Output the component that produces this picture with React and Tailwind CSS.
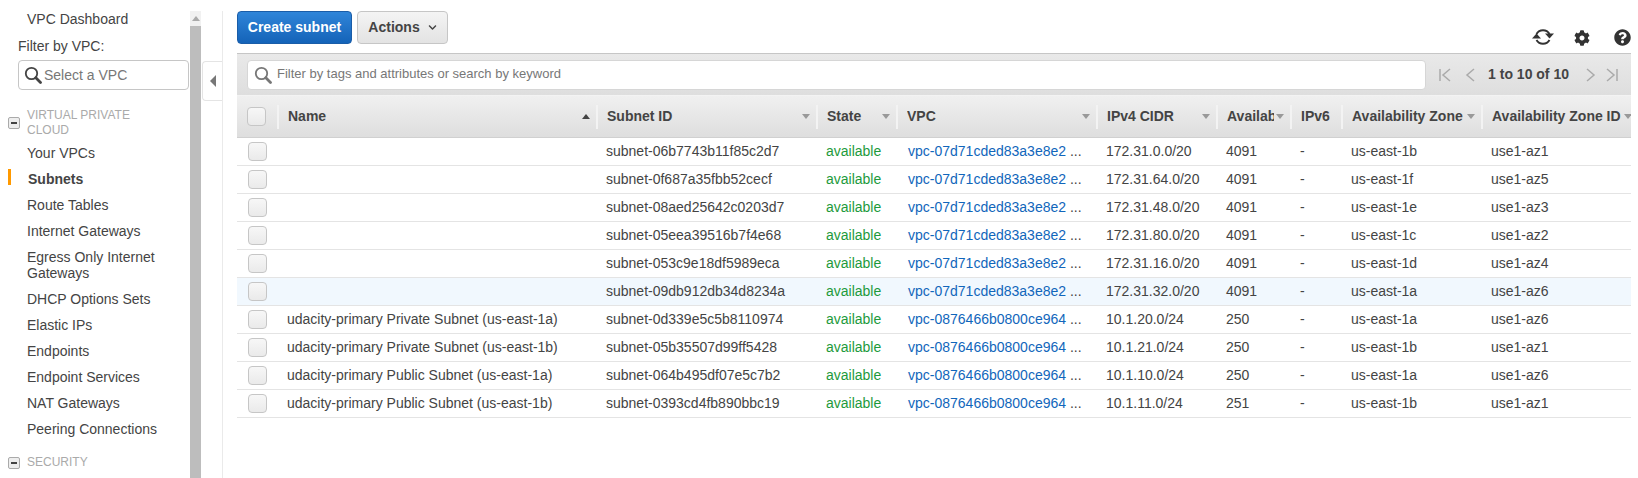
import React from "react";
import { FaCog, FaQuestionCircle, FaChevronDown } from "react-icons/fa";

const navTop = ["Your VPCs", "Subnets", "Route Tables", "Internet Gateways", "Egress Only Internet Gateways", "DHCP Options Sets", "Elastic IPs", "Endpoints", "Endpoint Services", "NAT Gateways", "Peering Connections"];

const rows = [
    ["", "subnet-06b7743b11f85c2d7", "vpc-07d71cded83a3e8e2", "172.31.0.0/20", "4091", "us-east-1b", "use1-az1"],
    ["", "subnet-0f687a35fbb52cecf", "vpc-07d71cded83a3e8e2", "172.31.64.0/20", "4091", "us-east-1f", "use1-az5"],
    ["", "subnet-08aed25642c0203d7", "vpc-07d71cded83a3e8e2", "172.31.48.0/20", "4091", "us-east-1e", "use1-az3"],
    ["", "subnet-05eea39516b7f4e68", "vpc-07d71cded83a3e8e2", "172.31.80.0/20", "4091", "us-east-1c", "use1-az2"],
    ["", "subnet-053c9e18df5989eca", "vpc-07d71cded83a3e8e2", "172.31.16.0/20", "4091", "us-east-1d", "use1-az4"],
    ["", "subnet-09db912db34d8234a", "vpc-07d71cded83a3e8e2", "172.31.32.0/20", "4091", "us-east-1a", "use1-az6"],
    ["udacity-primary Private Subnet (us-east-1a)", "subnet-0d339e5c5b8110974", "vpc-0876466b0800ce964", "10.1.20.0/24", "250", "us-east-1a", "use1-az6"],
    ["udacity-primary Private Subnet (us-east-1b)", "subnet-05b35507d99ff5428", "vpc-0876466b0800ce964", "10.1.21.0/24", "250", "us-east-1b", "use1-az1"],
    ["udacity-primary Public Subnet (us-east-1a)", "subnet-064b495df07e5c7b2", "vpc-0876466b0800ce964", "10.1.10.0/24", "250", "us-east-1a", "use1-az6"],
    ["udacity-primary Public Subnet (us-east-1b)", "subnet-0393cd4fb890bbc19", "vpc-0876466b0800ce964", "10.1.11.0/24", "251", "us-east-1b", "use1-az1"],
];

const Checkbox = () => (
    <div className="w-[19px] h-[19px] rounded-[4px] border border-[#c6c6c6] bg-gradient-to-b from-[#f7f7f7] to-[#eaeaea]" />
);

const Collapse = () => (
    <div className="w-[12px] h-[12px] rounded-[2px] border border-[#aaa] bg-[#eee] flex items-center justify-center">
        <div className="w-[6px] h-[2px] bg-[#444]" />
    </div>
);

const SearchIcon = ({ color }) => (
    <svg width="18" height="18" viewBox="0 0 18 18" fill="none" stroke={color}>
        <circle cx="7.5" cy="7.5" r="5.7" strokeWidth="1.8" />
        <path d="M11.8 11.8 L16.5 16.5" strokeWidth="2.8" strokeLinecap="round" />
    </svg>
);

const Th = ({ w, children, sort = true, up = false, textW = "flex-1" }) => (
    <div className={`${w} shrink-0 h-[24px] flex items-center border-l-2 border-[#f3f3f3] pl-[9px] pr-[6px] font-bold text-[#444]`}>
        <span className={`${textW} whitespace-nowrap overflow-hidden`}>{children}</span>
        {textW !== "flex-1" && <span className="flex-1" />}
        {sort && (up
            ? <span className="w-0 h-0 border-x-[4px] border-x-transparent border-b-[5px] border-b-[#444]" />
            : <span className="w-0 h-0 border-x-[4px] border-x-transparent border-t-[5px] border-t-[#999]" />)}
    </div>
);

const Td = ({ w, children, className = "" }) => (
    <div className={`${w} shrink-0 pl-[10px] whitespace-nowrap overflow-hidden ${className}`}>{children}</div>
);

const Pager = ({ d, w = 12 }) => (
    <svg width={w} height="16" viewBox={`0 0 ${w} 16`} fill="none" stroke="#aaa" strokeWidth="1.5"><path d={d} /></svg>
);

export default function App() {
    return (
        <div className="w-[1638px] h-[478px] overflow-hidden bg-white flex text-[14px] text-[#444] font-['Liberation_Sans',Arial,sans-serif]">
            {/* sidebar */}
            <div className="w-[190px] shrink-0 h-full overflow-hidden pt-[9px]">
                <div className="pl-[27px] leading-[20px]">VPC Dashboard</div>
                <div className="pl-[18px] mt-[7px] leading-[20px]">Filter by VPC:</div>
                <div className="ml-[18px] mt-[4px] w-[171px] h-[30px] rounded-[4px] border border-[#c6c6c6] flex items-center pl-[5px] gap-[2px] text-[#777]">
                    <SearchIcon color="#444" />
                    <span>Select a VPC</span>
                </div>
                <div className="flex items-center gap-[7px] pl-[8px] mt-[18px] text-[12px] leading-[15px] text-[#aaa]">
                    <Collapse />
                    <div className="w-[120px]">VIRTUAL PRIVATE CLOUD</div>
                </div>
                <div className="mt-[5px] flex flex-col gap-[6px]">
                    {navTop.map((n) => (
                        <div key={n} className={`relative pr-[30px] leading-[16px] py-[2px] ${n === "Subnets" ? "font-bold pl-[28px]" : "pl-[27px]"}`}>
                            {n === "Subnets" && <div className="absolute left-[8px] top-[0px] w-[3px] h-[16px] bg-[#f90]" />}
                            {n}
                        </div>
                    ))}
                </div>
                <div className="flex items-center gap-[7px] pl-[8px] mt-[16px] text-[12px] leading-[15px] text-[#aaa]">
                    <Collapse />
                    <div>SECURITY</div>
                </div>
            </div>

            {/* scrollbar */}
            <div className="w-[11px] shrink-0 mt-[11px] bg-[#f1f1f1] flex flex-col">
                <div className="h-[15px] flex items-center justify-center">
                    <span className="w-0 h-0 border-x-[4px] border-x-transparent border-b-[5px] border-b-[#aaa]" />
                </div>
                <div className="flex-1 bg-[#bdbdbd]" />
            </div>

            {/* collapse tab + divider */}
            <div className="w-[22px] shrink-0 mt-[11px] border-r border-[#eaeaea] flex flex-col items-end">
                <div className="mt-[50px] w-[20px] h-[40px] border border-r-0 border-[#e4e4e4] rounded-l-[4px] flex items-center justify-center bg-white">
                    <span className="w-0 h-0 border-y-[6px] border-y-transparent border-r-[6px] border-r-[#777]" />
                </div>
            </div>

            {/* main */}
            <div className="flex-1 min-w-0 ml-[14px] mr-[7px] pt-[11px] overflow-hidden">
                <div className="flex items-start h-[42px]">
                    <div className="w-[115px] h-[33px] rounded-[4px] border border-[#1a5da8] bg-gradient-to-b from-[#2f85d9] to-[#1463b8] text-white font-bold flex items-center justify-center">Create subnet</div>
                    <div className="ml-[5px] w-[91px] h-[33px] rounded-[4px] border border-[#c6c6c6] bg-gradient-to-b from-[#f4f4f4] to-[#e3e3e3] font-bold flex items-center justify-center gap-[8px]">
                        Actions
                        <FaChevronDown size={9} />
                    </div>
                    <div className="ml-auto flex items-center mt-[17px] text-[#333]">
                        <svg width="22" height="19" viewBox="0 0 22 19" fill="none" stroke="#333" strokeWidth="2">
                            <path d="M4.5 6 A7.5 7.5 0 0 1 17.5 6" />
                            <path d="M17.5 12 A7.5 7.5 0 0 1 4.5 12" />
                            <path d="M13 5.5 H22 L17.5 10.5 Z" fill="#333" stroke="none" />
                            <path d="M0 10.5 H9 L4.5 5.5 Z" fill="#333" stroke="none" />
                        </svg>
                        <FaCog size={16} className="ml-[20px]" />
                        <FaQuestionCircle size={17} className="ml-[24px]" />
                    </div>
                </div>

                {/* filter bar */}
                <div className="h-[42px] border-t border-[#c6c6c6] bg-gradient-to-b from-[#e9e9e9] to-[#dedede] flex items-center pl-[10px] pr-[13px]">
                    <div className="w-[1179px] h-[30px] rounded-[4px] border border-[#d6d6d6] bg-white flex items-center pl-[6px] gap-[5px] text-[13px] text-[#777]">
                        <SearchIcon color="#777" />
                        <span className="pb-[2px]">Filter by tags and attributes or search by keyword</span>
                    </div>
                    <div className="ml-auto flex items-center font-bold text-[#444]">
                        <Pager d="M1 2 V14 M11 2 L4 8 L11 14" />
                        <span className="w-[13px]" />
                        <Pager d="M10 2 L3 8 L10 14" />
                        <span className="ml-[12px] mr-[16px]">1 to 10 of 10</span>
                        <Pager d="M2 2 L9 8 L2 14" />
                        <span className="w-[9px]" />
                        <Pager d="M11 2 V14 M1 2 L8 8 L1 14" />
                    </div>
                </div>

                {/* header row */}
                <div className="h-[43px] border-t border-[#f3f3f3] border-b border-b-[#d0d0d0] bg-gradient-to-b from-[#f0f0f0] to-[#dedede] flex items-center">
                    <div className="w-[40px] shrink-0 pl-[10px]"><Checkbox /></div>
                    <Th w="w-[319px]" up>Name</Th>
                    <Th w="w-[220px]">Subnet ID</Th>
                    <Th w="w-[80px]">State</Th>
                    <Th w="w-[200px]">VPC</Th>
                    <Th w="w-[120px]">IPv4 CIDR</Th>
                    <Th w="w-[74px]" textW="w-[47px]">Availab</Th>
                    <Th w="w-[51px]" sort={false}>IPv6</Th>
                    <Th w="w-[140px]">Availability Zone</Th>
                    <Th w="w-[157px]">Availability Zone ID</Th>
                </div>

                {rows.map((r, i) => (
                    <div key={r[1]} className={`h-[28px] border-b border-[#e4e4e4] flex items-center ${i === 5 ? "bg-[#f1f8fe]" : ""}`}>
                        <div className="w-[40px] shrink-0 pl-[11px]"><Checkbox /></div>
                        <Td w="w-[319px]">{r[0]}</Td>
                        <Td w="w-[220px]">{r[1]}</Td>
                        <Td w="w-[80px]" className="text-[#1d9a3c]">available</Td>
                        <Td w="w-[200px]" className="text-[#1166bb]"><span className="ml-[2px]">{r[2]}</span> <span className="text-[#444]">...</span></Td>
                        <Td w="w-[120px]">{r[3]}</Td>
                        <Td w="w-[74px]">{r[4]}</Td>
                        <Td w="w-[51px]">-</Td>
                        <Td w="w-[140px]">{r[5]}</Td>
                        <Td w="w-[157px]">{r[6]}</Td>
                    </div>
                ))}
            </div>
        </div>
    );
}
